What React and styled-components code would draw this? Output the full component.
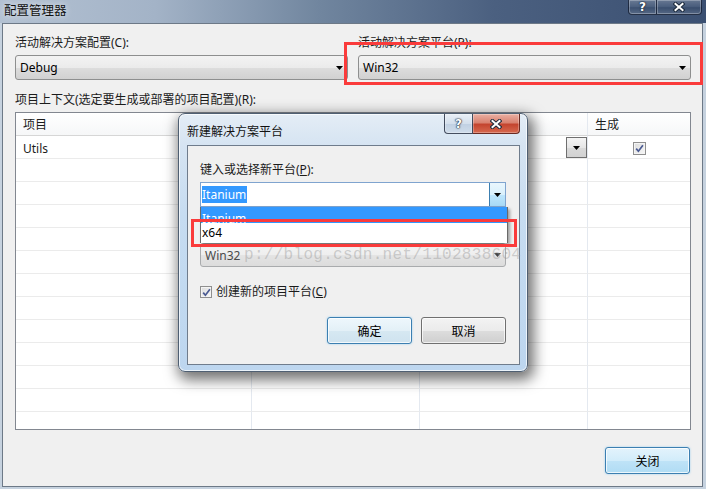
import React from "react";
import styled, { createGlobalStyle } from "styled-components";

const GlobalStyle = createGlobalStyle`
  * { box-sizing: border-box; }
  html, body { margin: 0; padding: 0; }
  body {
    width: 706px;
    height: 489px;
    overflow: hidden;
    font-family: "Noto Sans", "Noto Sans CJK SC", sans-serif;
    font-size: 12px;
    color: #1b1b1b;
    background: #c6d2df;
  }
`;

const Window = styled.div`
  position: relative;
  width: 706px;
  height: 489px;
  display: flex;
  flex-direction: column;
  background: #c6d2df;
`;

const TitleBar = styled.div`
  height: 23px;
  flex: none;
  display: flex;
  justify-content: space-between;
  align-items: flex-start;
  padding: 0 4px 0 4px;
  background: linear-gradient(90deg, #b3c1d2 0%, #a3b3c7 22%, #71869f 45%, #4b6080 70%, #3b5072 100%);
`;

const Title = styled.div`
  margin-top: 2px;
  line-height: 17px;
  font-size: 12.5px;
  color: #111;
  text-shadow: 0 0 6px rgba(255, 255, 255, 0.85);
`;

const CaptionGroup = styled.div`
  display: flex;
`;

const CaptionBtn = styled.div`
  width: ${p => p.$w}px;
  height: ${p => p.$h}px;
  display: flex;
  align-items: center;
  justify-content: center;
  border: 1px solid ${p => (p.$red ? "#6a2a22" : "rgba(15, 25, 45, 0.75)")};
  border-top: none;
  border-radius: ${p => (p.$first ? "0 0 0 4px" : "0 0 4px 0")};
  border-left: ${p => (p.$first ? undefined : "none")};
  background: ${p =>
    p.$red
      ? "linear-gradient(#eab0a3 0%, #d98270 45%, #c4452f 55%, #d7694f 100%)"
      : p.$light
      ? "linear-gradient(#e9eff6 0%, #d3dfec 50%, #c1d1e3 55%, #cfdcea 100%)"
      : "linear-gradient(rgba(255,255,255,0.22), rgba(255,255,255,0.06) 50%, rgba(0,0,0,0.05) 55%, rgba(255,255,255,0.12))"};
  box-shadow: inset 0 0 0 1px rgba(255, 255, 255, 0.28);
  font-family: "DejaVu Sans", sans-serif;
  font-weight: bold;
  font-size: 12px;
  color: #fff;
  text-shadow: 0 0 1px #1c2a3c, 0 0 1px #1c2a3c, 0 0 2px #1c2a3c;
`;

const Frame = styled.div`
  flex: 1;
  display: flex;
  padding: 0 3px 2px 2px;
`;

const Client = styled.div`
  flex: 1;
  display: flex;
  flex-direction: column;
  background: #f0f0f0;
  border: 1px solid #6d7987;
  padding: 11px 11px 12px 12px;
`;

const FieldRow = styled.div`
  display: grid;
  grid-template-columns: 1fr 1fr;
  column-gap: 10px;
`;

const Field = styled.div`
  display: flex;
  flex-direction: column;
  gap: 4px;
`;

const Label = styled.div`
  line-height: 16px;
  min-height: 16px;
  white-space: nowrap;
  margin-top: ${p => p.$mt || 0}px;
`;

const Combo = styled.div`
  height: ${p => p.$h || 25}px;
  display: flex;
  align-items: center;
  justify-content: space-between;
  padding: 0 4px;
  border: 1px solid ${p => (p.$dim ? "#a9abad" : "#8e8f8f")};
  border-radius: 3px;
  background: ${p =>
    p.$dim
      ? "linear-gradient(#f5f5f5 0%, #eeeeee 50%, #e4e4e4 51%, #dcdcdc 100%)"
      : "linear-gradient(#f3f3f3 0%, #ebebeb 50%, #dddddd 51%, #d1d1d1 100%)"};
  color: ${p => (p.$dim ? "#4a4a4a" : "#000")};
  margin-top: ${p => p.$mt || 0}px;
  white-space: nowrap;
`;

const ArrowSvg = styled.svg`
  flex: none;
  display: block;
`;

const Arrow = ({ color = "#000" }) => (
  <ArrowSvg width="7" height="4" viewBox="0 0 7 4">
    <path d="M0 0h7L3.5 4z" fill={color} />
  </ArrowSvg>
);

const Table = styled.div`
  margin-top: 4px;
  height: 318px;
  border: 1px solid #828790;
  background: #fff;
  overflow: hidden;
  display: grid;
  grid-template-columns: 236px 168px 168px 1fr;
  grid-auto-rows: 23px;
  align-content: start;
`;

const Cell = styled.div`
  display: flex;
  align-items: center;
  justify-content: ${p => (p.$center ? "center" : "space-between")};
  padding-left: ${p => (p.$center ? 0 : 7)}px;
  padding-top: ${p => (p.$head ? 0 : 2)}px;
  border-bottom: 1px solid ${p => (p.$head ? "#d6d6d6" : "#ebebeb")};
  border-right: ${p => (p.$last ? "none" : "1px solid #e4e9f0")};
  background: ${p => (p.$head ? "linear-gradient(#ffffff, #f6f7f8)" : "#fff")};
  white-space: nowrap;
  overflow: hidden;
`;

const CellDrop = styled.div`
  width: 21px;
  height: 21px;
  flex: none;
  display: flex;
  align-items: center;
  justify-content: center;
  border: 1px solid #6f6f6f;
  background: linear-gradient(#f4f4f4, #e6e6e6 50%, #d9d9d9 51%, #d2d2d2);
  align-self: flex-end;
`;

const Check = styled.div`
  width: ${p => p.$size || 12}px;
  height: ${p => p.$size || 12}px;
  flex: none;
  display: flex;
  align-items: center;
  justify-content: center;
  border: 1px solid #8f8f8f;
  background: linear-gradient(135deg, #dcdcdc, #f7f7f7);
  box-shadow: inset 0 0 0 1px #f4f4f4;
`;

const CheckMark = () => (
  <svg width="9" height="9" viewBox="0 0 9 9">
    <path d="M1.2 4.6 L3.4 7.2 L7.9 1.2" fill="none" stroke="#4a5a92" strokeWidth="1.7" />
  </svg>
);

const Footer = styled.div`
  margin-top: 17px;
  display: flex;
  justify-content: flex-end;
  gap: 9px;
  padding-right: ${p => p.$pr || 0}px;
`;

const Button = styled.div`
  width: 85px;
  height: 27px;
  display: flex;
  align-items: center;
  justify-content: center;
  border-radius: 3px;
  border: 1px solid ${p => (p.$default ? "#3c7fb1" : "#707070")};
  background: ${p =>
    p.$default
      ? p.$strong
        ? "linear-gradient(#e3f3fc 0%, #d2ecfa 50%, #bfe3f7 51%, #b0dcf4 100%)"
        : "linear-gradient(#eef7fc 0%, #e3f0f7 50%, #d6e8f2 51%, #cfe3ef 100%)"
      : "linear-gradient(#f3f3f3 0%, #ebebeb 50%, #dddddd 51%, #cfcfcf 100%)"};
  box-shadow: ${p =>
    p.$default
      ? "inset 0 0 0 1px rgba(255,255,255,0.75), 0 0 2px rgba(80,180,240,0.6)"
      : "inset 0 0 0 1px rgba(255,255,255,0.7)"};
  color: #000;
`;

const Dialog = styled.div`
  position: absolute;
  left: 178px;
  top: 113px;
  width: 350px;
  height: 259px;
  display: flex;
  flex-direction: column;
  padding: 0 7px 6px 8px;
  border: 1px solid #4f5f72;
  border-radius: 7px;
  background: linear-gradient(#e4edf6 0%, #d6e4f2 12%, #c6dcf1 40%, #bdd6ef 100%);
  box-shadow: inset 0 0 0 1px rgba(255, 255, 255, 0.7), 3px 5px 14px 3px rgba(0, 0, 0, 0.55);
`;

const DialogTitleRow = styled.div`
  height: 31px;
  flex: none;
  display: flex;
  justify-content: space-between;
  align-items: flex-start;
`;

const DialogTitle = styled.div`
  margin-top: 10px;
  line-height: 16px;
  color: #111;
`;

const DialogClient = styled.div`
  position: relative;
  flex: 1;
  display: flex;
  flex-direction: column;
  background: #f0f0f0;
  border: 1px solid #6f7c8c;
  padding: 16px 13px 0 12px;
`;

const EditCombo = styled.div`
  margin-top: 4px;
  height: 25px;
  display: flex;
  align-items: stretch;
  border: 1px solid #7fa4cf;
  background: #fff;
`;

const EditText = styled.div`
  flex: 1;
  display: flex;
  align-items: center;
  padding-left: 1px;
`;

const Selected = styled.span`
  background: #3399ff;
  color: #fff;
  line-height: 17px;
  padding: 0 1px 0 0;
`;

const EditDrop = styled.div`
  width: 16px;
  display: flex;
  align-items: center;
  justify-content: center;
  border-left: 1px solid #3c7fb1;
  background: linear-gradient(#eaf6fd 0%, #d9f0fc 50%, #bee6fd 51%, #a7d9f5 100%);
`;

const DropList = styled.div`
  position: absolute;
  left: 12px;
  top: 61px;
  width: 308px;
  height: 36px;
  display: flex;
  flex-direction: column;
  border: 1px solid #6a6a6a;
  border-top: none;
  background: #fff;
  box-shadow: 2px 2px 3px rgba(0, 0, 0, 0.35);
`;

const ListItem = styled.div`
  height: ${p => p.$h}px;
  flex: none;
  overflow: hidden;
  padding: ${p => p.$pt}px 0 0 1px;
  line-height: 16px;
  background: ${p => (p.$active ? "#3399ff" : "#fff")};
  color: ${p => (p.$active ? "#fff" : "#000")};
`;

const CheckRow = styled.div`
  margin-top: 17px;
  display: flex;
  align-items: center;
  gap: 4px;
  line-height: 16px;
`;

const Highlight = styled.div`
  position: absolute;
  left: ${p => p.$x}px;
  top: ${p => p.$y}px;
  width: ${p => p.$w}px;
  height: ${p => p.$h}px;
  border: 3px solid #fa3b3b;
  pointer-events: none;
`;

const Watermark = styled.div`
  position: absolute;
  left: 244px;
  top: 245px;
  font-family: "Liberation Mono", monospace;
  font-size: 16px;
  letter-spacing: 0.3px;
  line-height: 20px;
  color: rgba(150, 150, 150, 0.42);
  white-space: nowrap;
  pointer-events: none;
`;

const CloseGlyph = () => (
  <svg width="12" height="10" viewBox="0 0 12 10">
    <path d="M2.5 2 L9.5 8 M9.5 2 L2.5 8" stroke="#1c2a3c" strokeWidth="4" strokeLinecap="square" />
    <path d="M2.5 2 L9.5 8 M9.5 2 L2.5 8" stroke="#fff" strokeWidth="2" strokeLinecap="square" />
  </svg>
);

const rows = [
  { name: "Utils", drop: true, build: true },
  ...Array.from({ length: 12 }, () => null),
];

export default function App() {
  return (
    <>
      <GlobalStyle />
      <Window>
        <TitleBar>
          <Title>配置管理器</Title>
          <CaptionGroup>
            <CaptionBtn $w={29} $h={15} $first>?</CaptionBtn>
            <CaptionBtn $w={45} $h={15}>
              <CloseGlyph />
            </CaptionBtn>
          </CaptionGroup>
        </TitleBar>
        <Frame>
          <Client>
            <FieldRow>
              <Field>
                <Label>活动解决方案配置(C):</Label>
                <Combo>
                  Debug
                  <Arrow />
                </Combo>
              </Field>
              <Field>
                <Label>活动解决方案平台(P):</Label>
                <Combo>
                  Win32
                  <Arrow />
                </Combo>
              </Field>
            </FieldRow>
            <Label $mt={12}>项目上下文(选定要生成或部署的项目配置)(R):</Label>
            <Table>
              <Cell $head>项目</Cell>
              <Cell $head />
              <Cell $head />
              <Cell $head $last>生成</Cell>
              {rows.map((r, i) => (
                <React.Fragment key={i}>
                  <Cell>{r && r.name}</Cell>
                  <Cell />
                  <Cell>
                    <span />
                    {r && r.drop && (
                      <CellDrop>
                        <Arrow />
                      </CellDrop>
                    )}
                  </Cell>
                  <Cell $last $center>
                    {r && r.build && (
                      <Check $size={13}>
                        <CheckMark />
                      </Check>
                    )}
                  </Cell>
                </React.Fragment>
              ))}
            </Table>
            <Footer $pr={1}>
              <Button $default $strong>关闭</Button>
            </Footer>
          </Client>
        </Frame>

        <Highlight $x={344} $y={42} $w={359} $h={43} />

        <Dialog>
          <DialogTitleRow>
            <DialogTitle>新建解决方案平台</DialogTitle>
            <CaptionGroup>
              <CaptionBtn $w={29} $h={20} $first $light>?</CaptionBtn>
              <CaptionBtn $w={47} $h={20} $red>
                <CloseGlyph />
              </CaptionBtn>
            </CaptionGroup>
          </DialogTitleRow>
          <DialogClient>
            <Label>
              键入或选择新平台(<u>P</u>):
            </Label>
            <EditCombo>
              <EditText>
                <Selected>Itanium</Selected>
              </EditText>
              <EditDrop>
                <Arrow />
              </EditDrop>
            </EditCombo>
            <Label $mt={16} />
            <Combo $dim $h={24} $mt={4}>
              Win32
              <Arrow color="#444" />
            </Combo>
            <CheckRow>
              <Check>
                <CheckMark />
              </Check>
              <span>
                创建新的项目平台(<u>C</u>)
              </span>
            </CheckRow>
            <Footer>
              <Button $default>确定</Button>
              <Button>取消</Button>
            </Footer>
            <DropList>
              <ListItem $h={16} $pt={4} $active>
                Itanium
              </ListItem>
              <ListItem $h={20} $pt={2}>
                x64
              </ListItem>
            </DropList>
          </DialogClient>
        </Dialog>

        <Watermark>p://blog.csdn.net/1102838604</Watermark>
        <Highlight $x={191} $y={219} $w={326} $h={28} />
      </Window>
    </>
  );
}
